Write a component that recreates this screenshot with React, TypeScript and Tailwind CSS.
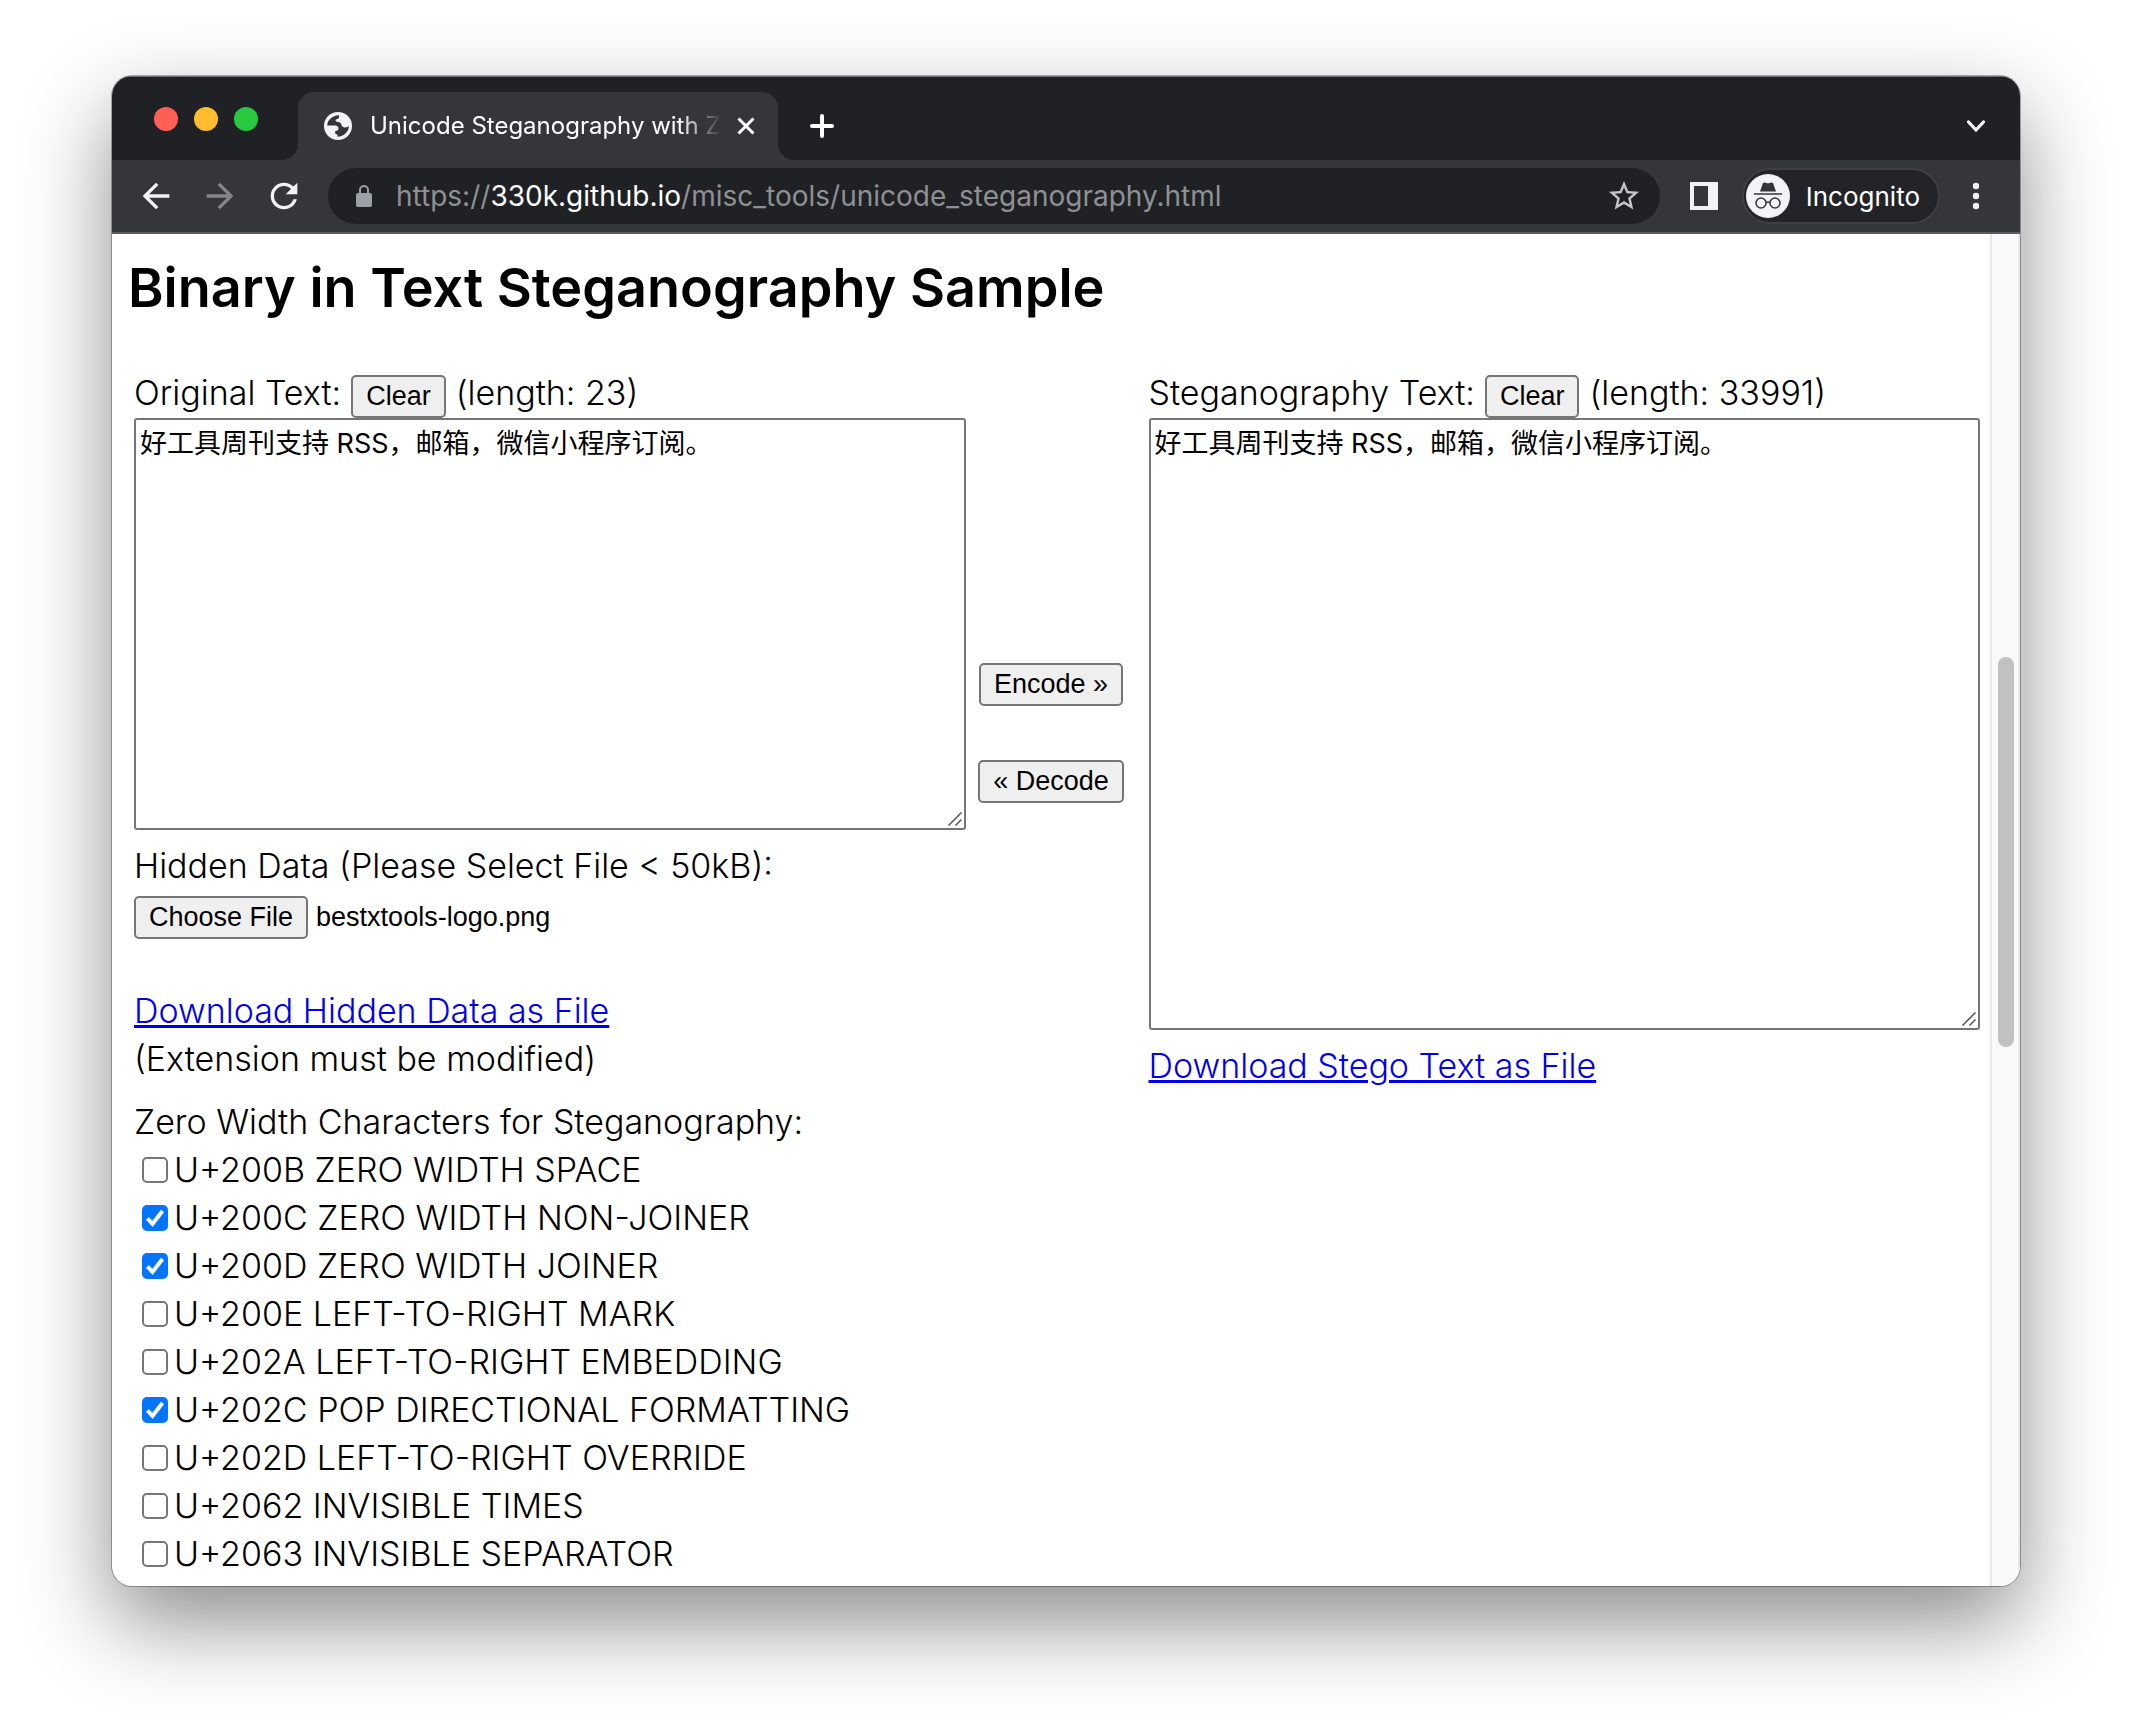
import { useId, useState } from "react";
import { MdArrowBack, MdArrowForward, MdRefresh, MdStarBorder } from "react-icons/md";

const SAMPLE = "好工具周刊支持 RSS\uFF0C邮箱\uFF0C微信小程序订阅。";

const CHARACTERS = [
  { name: "U+200B ZERO WIDTH SPACE", on: false },
  { name: "U+200C ZERO WIDTH NON-JOINER", on: true },
  { name: "U+200D ZERO WIDTH JOINER", on: true },
  { name: "U+200E LEFT-TO-RIGHT MARK", on: false },
  { name: "U+202A LEFT-TO-RIGHT EMBEDDING", on: false },
  { name: "U+202C POP DIRECTIONAL FORMATTING", on: true },
  { name: "U+202D LEFT-TO-RIGHT OVERRIDE", on: false },
  { name: "U+2062 INVISIBLE TIMES", on: false },
  { name: "U+2063 INVISIBLE SEPARATOR", on: false },
];

const BUTTON =
  "flex h-[43px] items-center justify-center rounded-[5px] border-2 border-[#767676] bg-[#efefef] px-[13px] font-['Liberation_Sans',Arial,sans-serif] text-[27px] leading-none font-normal whitespace-nowrap text-black";

function Globe() {
  return (
    <svg viewBox="0 0 28 28" className="size-7 shrink-0" aria-hidden="true">
      <circle cx="14" cy="14" r="14" fill="#f1f3f4" />
      <path
        d="M3.200 13.500C3.500 8 8 3.600 15 3.300L15 5.500C15 7.500 11.500 6.500 11.500 8.500C11.500 10.500 16.500 9.500 17 11.500C17.300 14 19 15.500 21 15.500C23 15.500 24 14.500 25 14C24.800 19.500 20 24.500 13.500 24.700L13.500 22.500C11.500 22.500 11 21.500 11 20C11 18.500 14.500 19 14.500 17C14.500 14 12.500 13.500 10 13.500Z"
        fill="#35363a"
      />
    </svg>
  );
}

function TabStrip() {
  return (
    <div className="flex h-[84px] shrink-0 items-end border-t border-[#707072] bg-[#202124]">
      <div className="flex h-full items-center gap-4 pt-px pl-[42px]">
        <button aria-label="Close window" className="size-6 rounded-full bg-[#ff5f57]" />
        <button aria-label="Minimise window" className="size-6 rounded-full bg-[#febc2e]" />
        <button aria-label="Zoom window" className="size-6 rounded-full bg-[#28c840]" />
      </div>
      <svg viewBox="0 0 16 16" className="ml-6 size-4 shrink-0" aria-hidden="true">
        <path d="M16 0v16H0A16 16 0 0 0 16 0Z" fill="#35363a" />
      </svg>
      <div className="flex h-[68px] w-[480px] items-center rounded-t-2xl bg-[#35363a] pl-[26px] pr-[22px]">
        <Globe />
        <span className="ml-[18px] flex-1 overflow-hidden whitespace-nowrap text-2xl text-white [mask-image:linear-gradient(to_right,black_88%,transparent)]">
          Unicode Steganography with Z
        </span>
        <button aria-label="Close tab" className="ml-3.5">
          <svg viewBox="0 0 20 20" className="size-5" aria-hidden="true">
            <path d="M2.500 2.500l15 15M17.500 2.500l-15 15" stroke="#fff" strokeWidth="3" />
          </svg>
        </button>
      </div>
      <svg viewBox="0 0 16 16" className="size-4 shrink-0" aria-hidden="true">
        <path d="M0 0v16h16A16 16 0 0 1 0 0Z" fill="#35363a" />
      </svg>
      <button aria-label="New tab" className="mb-[22px] ml-4">
        <svg viewBox="0 0 24 24" className="size-6" aria-hidden="true">
          <path d="M12 2v20M2 12h20" stroke="#fff" strokeWidth="4" strokeLinecap="round" />
        </svg>
      </button>
      <button aria-label="Search tabs" className="mr-8 mb-[22px] ml-auto">
        <svg viewBox="0 0 24 24" className="size-6" aria-hidden="true">
          <path d="M4.500 8l7.500 8 7.500-8" fill="none" stroke="#fff" strokeWidth="3.200" strokeLinecap="round" />
        </svg>
      </button>
    </div>
  );
}

function Toolbar() {
  return (
    <div className="flex h-[74px] shrink-0 items-center border-b-2 border-[#5a5a60] bg-[#35363a] pr-8 pl-6">
      <button aria-label="Back">
        <MdArrowBack className="size-10 text-[#f1f3f4]" />
      </button>
      <button aria-label="Forward" className="ml-6">
        <MdArrowForward className="size-10 text-[#85868a]" />
      </button>
      <button aria-label="Reload" className="ml-6">
        <MdRefresh className="size-10 text-[#f1f3f4]" />
      </button>
      <div className="ml-6 flex h-14 flex-1 items-center rounded-full bg-[#202124] pr-[18px] pl-7">
        <svg viewBox="0 0 16 22" className="h-[22px] w-4 shrink-0" aria-hidden="true">
          <rect y="8" width="16" height="14" rx="2" fill="#9aa0a6" />
          <path d="M4 9V5a4 4 0 0 1 8 0v4" fill="none" stroke="#9aa0a6" strokeWidth="2" />
        </svg>
        <a href="https://330k.github.io/misc_tools/unicode_steganography.html" className="ml-6 flex-1 text-[28px] whitespace-nowrap text-[#8f9093]">
          https://<span className="text-white">330k.github.io</span>/misc_tools/unicode_steganography.html
        </a>
        <button aria-label="Bookmark this tab">
          <MdStarBorder className="size-9 text-[#c4c4c4]" />
        </button>
      </div>
      <button aria-label="Side panel" className="ml-[30px]">
        <svg viewBox="0 0 28 28" className="size-7" aria-hidden="true">
          <path d="M0 0h28v28H0zM4 4v20h14V4z" fill="#f1f3f4" fillRule="evenodd" />
        </svg>
      </button>
      <button className="ml-6 flex h-14 items-center gap-4 rounded-full border-2 border-[#3f4043] bg-[#242428] pr-[18px] pl-0.5 text-[26px] text-white">
        <svg viewBox="0 0 44 44" className="size-11" aria-hidden="true">
          <circle cx="22" cy="22" r="22" fill="#f1f3f4" />
          <path d="M17 9l2-.500 3 1 3-1 2 .500 3 8.500H14z" fill="#35363a" />
          <path d="M8 20h28" stroke="#35363a" strokeWidth="1.600" />
          <g fill="none" stroke="#35363a" strokeWidth="1.500">
            <circle cx="15" cy="29" r="5" />
            <circle cx="29" cy="29" r="5" />
            <path d="M20 28.500q2-1 4 0" />
          </g>
        </svg>
        Incognito
      </button>
      <button aria-label="Menu" className="ml-6">
        <svg viewBox="0 0 24 28" className="h-7 w-6" aria-hidden="true" fill="#f1f3f4">
          <circle cx="12" cy="4" r="3.200" />
          <circle cx="12" cy="14" r="3.200" />
          <circle cx="12" cy="24" r="3.200" />
        </svg>
      </button>
    </div>
  );
}

function TextPanel({ label, length, tall }: { label: string; length: number; tall?: boolean }) {
  const id = useId();
  const [text, setText] = useState(SAMPLE);
  return (
    <div>
      <div className="flex h-[50px] items-start gap-2.5 pt-px">
        <label htmlFor={id}>{label}</label>
        <button className={`${BUTTON} mt-1.5`} onClick={() => setText("")}>
          Clear
        </button>
        <span>(length: {length})</span>
      </div>
      <div className="relative">
        <textarea
          id={id}
          value={text}
          onChange={(e) => setText(e.target.value)}
          className={`${tall ? "h-[612px]" : "h-[412px]"} block w-full resize-none rounded-[3px] border-2 border-[#767676] bg-white px-1 py-1 font-[Inter,'Noto_Sans_CJK_SC',sans-serif] text-[27px] leading-10 font-normal`}
        />
        <svg viewBox="0 0 14 14" className="absolute right-1 bottom-1 size-3.5" aria-hidden="true">
          <path d="M.500 13.500l13-13M7.500 13.500l6-6" stroke="#555" strokeWidth="1.500" />
        </svg>
      </div>
    </div>
  );
}

function CharacterOption({ name, on }: { name: string; on: boolean }) {
  const [checked, setChecked] = useState(on);
  return (
    <label className="flex h-12 items-center gap-1.5 pl-2">
      <span className="grid">
        <input
          type="checkbox"
          checked={checked}
          onChange={(e) => setChecked(e.target.checked)}
          className="peer col-start-1 row-start-1 size-[26px] appearance-none rounded-[5px] border-2 border-[#767676] bg-white checked:border-[#0075ff] checked:bg-[#0075ff]"
        />
        <svg viewBox="0 0 26 26" className="pointer-events-none invisible col-start-1 row-start-1 size-[26px] peer-checked:visible" aria-hidden="true">
          <path d="M5.500 13.500l5 5.500L20.500 6" fill="none" stroke="#fff" strokeWidth="4" />
        </svg>
      </span>
      {name}
    </label>
  );
}

export default function App() {
  return (
    <div className="flex min-h-screen flex-col bg-white px-28 pt-[76px] pb-[148px] font-[Inter,'Noto_Sans_CJK_SC',sans-serif]">
      <div className="flex flex-1 flex-col overflow-hidden rounded-[20px] bg-white shadow-[0_0_0_1px_rgba(0,0,0,0.3),0_36px_88px_rgba(0,0,0,0.46)]">
        <TabStrip />
        <Toolbar />
        <div className="flex flex-1">
          <main className="flex-1 pr-2.5 pb-2 pl-[22px] text-[34px] leading-[48px] font-[350] text-black">
            <h1 className="-ml-1.5 pt-3.5 pb-10 text-[54px] leading-[80px] font-semibold">Binary in Text Steganography Sample</h1>
            <div className="grid grid-cols-[1fr_183px_1fr]">
              <section>
                <TextPanel label="Original Text:" length={23} />
                <label htmlFor="hidden-file" className="mt-3 block">
                  Hidden Data (Please Select File &lt; 50kB):
                </label>
                <div className="mt-1.5 flex items-center gap-2">
                  <input id="hidden-file" type="file" className="sr-only" />
                  <label htmlFor="hidden-file" className={BUTTON}>
                    Choose File
                  </label>
                  <span className="font-['Liberation_Sans',Arial,sans-serif] text-[27px] leading-none font-normal">bestxtools-logo.png</span>
                </div>
                <a href="#hidden" className="mt-12 block w-fit text-[#0000ee] underline decoration-[3px]">
                  Download Hidden Data as File
                </a>
                <p>(Extension must be modified)</p>
              </section>
              <div className="flex flex-col items-center justify-center gap-[54px] pt-2 pr-3">
                <button className={BUTTON}>Encode »</button>
                <button className={BUTTON}>« Decode</button>
              </div>
              <section>
                <TextPanel label="Steganography Text:" length={33991} tall />
                <a href="#stego" className="mt-3 block w-fit text-[#0000ee] underline decoration-[3px]">
                  Download Stego Text as File
                </a>
              </section>
            </div>
            <fieldset className="mt-2">
              <legend>Zero Width Characters for Steganography:</legend>
              {CHARACTERS.map((c) => (
                <CharacterOption key={c.name} {...c} />
              ))}
            </fieldset>
          </main>
          <div className="flex w-[30px] flex-col border-x-2 border-[#e8e8e8] bg-[#fafafa] pr-1 pl-1.5">
            <div className="grow-[423]" />
            <div className="h-[390px] w-4 rounded-full bg-[#c1c1c1]" />
            <div className="grow-[539]" />
          </div>
        </div>
      </div>
    </div>
  );
}
